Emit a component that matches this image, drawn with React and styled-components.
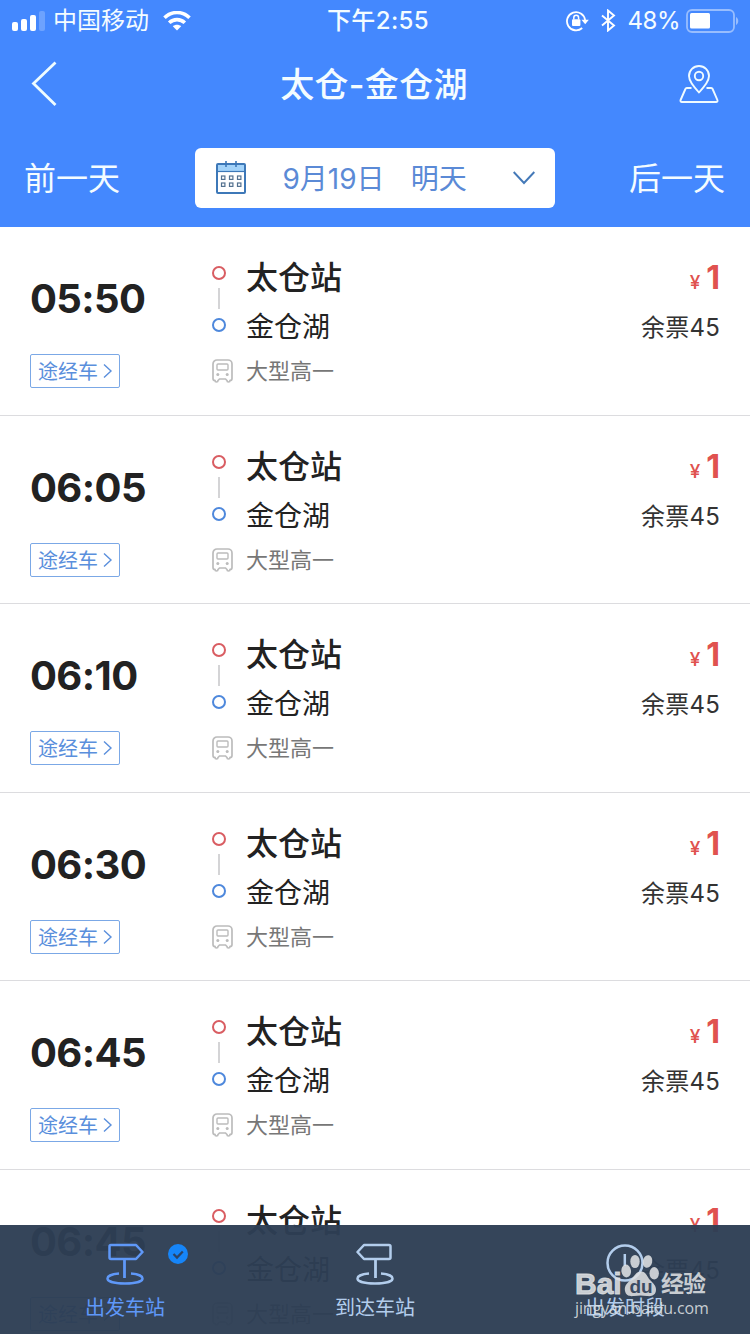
import React from "react";
import styled, { createGlobalStyle } from "styled-components";

const colors = {
  brand: "#4488fe",
  link: "#5a8fdc",
  text: "#222222",
  muted: "#777777",
  price: "#e0524f",
  border: "#dcdcdf",
};

const GlobalStyle = createGlobalStyle`
  * {
    box-sizing: border-box;
  }
  body {
    margin: 0;
    background: #ffffff;
    font-family: Inter, "Noto Sans CJK SC", sans-serif;
    color: ${colors.text};
  }
  svg {
    display: block;
    flex: none;
  }
`;

const Screen = styled.div`
  position: relative;
  width: 750px;
  height: 1334px;
  overflow: hidden;
  background: #ffffff;
`;

const Header = styled.header`
  height: 227px;
  background: ${colors.brand};
  color: #f4fcff;
`;

const StatusBar = styled.div`
  display: grid;
  grid-template-columns: 1fr auto 1fr;
  align-items: center;
  height: 40px;
  padding: 0 11px 0 12px;
  font-size: 24px;
  line-height: 40px;
`;

const StatusGroup = styled.div`
  display: flex;
  align-items: center;
  justify-content: ${({ $end }) => ($end ? "flex-end" : "flex-start")};
`;

const Carrier = styled.span`
  margin: 0 14px 0 8px;
  padding-top: 1px;
`;

const Clock = styled.span`
  font-weight: 500;
  padding-top: 1px;
  letter-spacing: 0.4px;
  margin-left: 5px;
`;

const Percent = styled.span`
  margin: 0 6px 0 12px;
  padding-top: 1px;
  letter-spacing: -0.5px;
`;

const NavBar = styled.div`
  display: flex;
  align-items: center;
  justify-content: space-between;
  height: 88px;
  padding: 0 31px;
`;

const Title = styled.h1`
  margin: 0;
  padding-top: 2px;
  font-size: 34px;
  letter-spacing: 0.3px;
  font-weight: 500;
  line-height: 48px;
`;

const DateBar = styled.div`
  display: flex;
  align-items: center;
  justify-content: space-between;
  height: 99px;
  padding: 0 25px 0 24px;
`;

const DayLink = styled.span`
  padding-top: 2px;
  font-size: 32px;
  line-height: 48px;
`;

const DatePicker = styled.div`
  display: flex;
  align-items: center;
  width: 360px;
  height: 60px;
  padding: 0 20px;
  border-radius: 6px;
  background: #ffffff;
  color: #5b8ad6;
  font-size: 28px;
  line-height: 58px;
`;

const DateText = styled.span`
  margin-left: 36px;
  padding-top: 3px;
`;

const DateHint = styled.span`
  flex: 1;
  margin-left: 26px;
  padding-top: 3px;
`;

const Trip = styled.article`
  display: flex;
  height: 188.6px;
  padding: 0 30px;
  border-bottom: 1px solid ${colors.border};
`;

const Departure = styled.div`
  display: flex;
  flex-direction: column;
  align-items: flex-start;
  width: 182px;
  padding-top: 48px;
`;

const Time = styled.span`
  font-size: 40px;
  font-weight: 700;
  letter-spacing: -0.6px;
  line-height: 48px;
`;

const Tag = styled.span`
  display: flex;
  align-items: center;
  gap: 5px;
  width: 90px;
  height: 34px;
  margin-top: 31px;
  padding-left: 7px;
  border: 1px solid #7ba8e6;
  border-radius: 2px;
  color: ${colors.link};
  font-size: 20px;
  line-height: 32px;
`;

const TagText = styled.span`
  padding-top: 2px;
`;

const Track = styled.div`
  display: flex;
  flex-direction: column;
  width: 34px;
  padding-top: 39px;
`;

const Dot = styled.span`
  width: 14px;
  height: 14px;
  border: 2px solid ${({ $color }) => $color};
  border-radius: 50%;
`;

const TrackLine = styled.span`
  width: 2px;
  height: 21px;
  margin: 8px 0 9px 6px;
  background: #d4d4d6;
`;

const Vehicle = styled.span`
  margin-top: 27px;
`;

const Stops = styled.div`
  flex: 1;
  display: flex;
  flex-direction: column;
  padding-top: 26px;
`;

const From = styled.span`
  font-size: 32px;
  font-weight: 500;
  line-height: 50px;
`;

const To = styled.span`
  font-size: 28px;
  line-height: 48px;
`;

const Model = styled.span`
  color: ${colors.muted};
  font-size: 22px;
  line-height: 40px;
`;

const Fare = styled.div`
  display: flex;
  flex-direction: column;
  align-items: flex-end;
  padding-top: 26px;
`;

const Price = styled.span`
  color: ${colors.price};
  font-size: 32px;
  font-weight: 700;
  line-height: 50px;
`;

const Yen = styled.small`
  margin-right: 6px;
  font-size: 19px;
  font-weight: 500;
`;

const Seats = styled.span`
  color: #333333;
  font-size: 24px;
  letter-spacing: 0.2px;
  line-height: 40px;
`;

const TabBar = styled.nav`
  position: absolute;
  left: 0;
  right: 0;
  bottom: 0;
  display: grid;
  grid-template-columns: repeat(3, 1fr);
  height: 109px;
  background: rgba(46, 62, 84, 0.965);
`;

const Tab = styled.div`
  position: relative;
  display: flex;
  flex-direction: column;
  align-items: center;
  padding-top: 17px;
  color: ${({ $active }) => ($active ? "#5f98f8" : "#b3cdec")};
`;

const TabLabel = styled.span`
  margin-top: 6px;
  font-size: 20px;
  line-height: 34px;
`;

const Badge = styled.span`
  position: absolute;
  top: 19px;
  left: 168px;
`;

const Watermark = styled.div`
  position: absolute;
  left: 575px;
  top: 1250px;
  width: 136px;
  color: rgba(222, 224, 227, 0.88);
`;

const Brand = styled.div`
  display: flex;
  align-items: flex-end;
  height: 49px;
  font-family: "Liberation Sans", "Noto Sans CJK SC", sans-serif;
  font-weight: 700;
  line-height: 30px;
`;

const BrandName = styled.span`
  width: 46px;
  font-size: 30px;
  -webkit-text-stroke: 1px currentColor;
`;

const Paw = styled.span`
  margin-bottom: 2px;
`;

const BrandTopic = styled.span`
  margin-left: 2px;
  font-size: 23px;
  letter-spacing: -1px;
`;

const Site = styled.div`
  font-family: "Open Sans", sans-serif;
  font-size: 16px;
  letter-spacing: -0.15px;
  line-height: 18px;
`;

const SignalIcon = () => (
  <svg width="33" height="20" viewBox="0 0 33 20" fill="#fff">
    <rect x="0" y="11" width="6" height="9" rx="2" />
    <rect x="9" y="8" width="6" height="12" rx="2" />
    <rect x="18" y="4" width="6" height="16" rx="2" />
    <rect x="27" y="0" width="6" height="20" rx="2" opacity=".22" />
  </svg>
);

const WifiIcon = () => (
  <svg width="28" height="20" viewBox="0 0 28 20" fill="none" stroke="#fff">
    <path d="M1.5 6.8C8.5-.2 19.5-.2 26.5 6.8" strokeWidth="3.6" />
    <path d="M6.2 11.8c4.4-4.3 11.2-4.3 15.6 0" strokeWidth="3.6" />
    <path d="M14 19.5l-4.2-4.3c2.4-2 6-2 8.4 0z" fill="#fff" stroke="none" />
  </svg>
);

const RotationLockIcon = () => (
  <svg width="23" height="22" viewBox="0 0 23 22" fill="none" stroke="#fff" strokeWidth="1.8">
    <path d="M16.2 18A9.1 9.1 0 1 1 19.1 10" />
    <path d="M15.5 9.8h7.3l-3.6 4.5z" fill="#fff" stroke="none" />
    <rect x="6" y="9.3" width="8.4" height="6.6" rx="1" fill="#fff" stroke="none" />
    <path d="M7.8 9.5V7.7a2.4 2.4 0 0 1 4.8 0v1.8" strokeWidth="1.5" />
  </svg>
);

const BluetoothIcon = () => (
  <svg width="27" height="23" viewBox="-12 0 27 23" fill="none" stroke="#fff" strokeWidth="1.9">
    <path d="M1 6.5l12 10-6 5V1.5l6 5-12 10" />
  </svg>
);

const BatteryIcon = () => (
  <svg width="53" height="24" viewBox="0 0 53 24">
    <rect x="1" y="1" width="47" height="22" rx="5" fill="none" stroke="#fff" strokeOpacity=".45" strokeWidth="1.8" />
    <rect x="4" y="4" width="20" height="15.5" rx="1.5" fill="#fff" />
    <path d="M50 8c3 1.5 3 6.5 0 8z" fill="#fff" opacity=".45" />
  </svg>
);

const BackIcon = () => (
  <svg width="38" height="46" viewBox="0 0 38 46" fill="none" stroke="#effcff" strokeWidth="2.8">
    <path d="M24.5 1.5L2.5 22.5l22 21.5" />
  </svg>
);

const MapIcon = () => (
  <svg width="40" height="38" viewBox="0 0 40 38" fill="none" stroke="#f0fbff" strokeWidth="1.9" strokeLinejoin="round">
    <path d="M20 27.5C14 20.5 10 15.8 10 11a10 10 0 0 1 20 0c0 4.8-4 9.5-10 16.5z" />
    <circle cx="20" cy="11" r="4.2" />
    <path d="M12.5 23H7.8a1.5 1.5 0 0 0-1.4 1L1.6 35c-.5 1.2.2 2 1.3 2h34.2c1.1 0 1.8-.8 1.3-2l-4.8-11a1.5 1.5 0 0 0-1.4-1h-4.7" />
  </svg>
);

const CalendarIcon = () => (
  <svg width="32" height="33" viewBox="0 0 32 33" fill="none" stroke="#3d78b8" strokeWidth="2">
    <rect x="2" y="3" width="28" height="29" rx="1" />
    <path d="M3 4h26v6H3z" fill="#a3d3fa" stroke="none" />
    <path d="M2 10.5h28" strokeWidth="1.2" />
    <path d="M11 0v6M21 0v6" strokeWidth="1.6" />
    {[15, 22].map((y) =>
      [6.5, 14.5, 22.5].map((x) => (
        <rect key={`${x}-${y}`} x={x} y={y} width="3.4" height="3.4" stroke="#53718f" strokeWidth="1.2" />
      ))
    )}
  </svg>
);

const ChevronDownIcon = () => (
  <svg width="22" height="14" viewBox="0 0 22 14" fill="none" stroke="#4479b8" strokeWidth="1.9">
    <path d="M.7 1L11 12 21.3 1" />
  </svg>
);

const ChevronRightIcon = () => (
  <svg width="10" height="16" viewBox="0 0 10 16" fill="none" stroke="#5a8fdc" strokeWidth="1.4">
    <path d="M1 1.5L8 8l-7 6.5" />
  </svg>
);

const BusIcon = () => (
  <svg width="21" height="24" viewBox="0 0 21 24" fill="none" stroke="#bcbcbc" strokeWidth="1.7">
    <path d="M5 1h11a4 4 0 0 1 4 4v14.5a2 2 0 0 1-2 2v0a1.5 1.5 0 0 1-3 0l-1.500-1.500h-6L6 21.500a1.500 1.500 0 0 1-3 0v0a2 2 0 0 1-2-2V5a4 4 0 0 1 4-4z" />
    <rect x="5" y="5" width="11" height="6" rx="1" strokeWidth="1.4" />
    <circle cx="5.8" cy="15.6" r="1.5" fill="#bcbcbc" stroke="none" />
    <circle cx="15.2" cy="15.6" r="1.5" fill="#bcbcbc" stroke="none" />
  </svg>
);

const SignpostIcon = ({ flip }) => (
  <svg width="38" height="43" viewBox="0 0 38 43" fill="none" stroke="currentColor" strokeWidth="2.5" strokeLinejoin="round">
    <g transform={flip ? "matrix(-1 0 0 1 38 0)" : undefined}>
      <path d="M5 3h25l6.500 7-6.500 7H5a1.500 1.500 0 0 1-1.500-1.500v-11A1.500 1.500 0 0 1 5 3z" />
      <path d="M18.5 17v19" strokeWidth="2.8" />
      <path d="M13 31.5C6 32 1.5 34 1.5 36.5c0 3 7.5 5 17.5 5s17.5-2 17.5-5c0-2.5-4.5-4.5-11.5-5" />
    </g>
  </svg>
);

const ClockIcon = () => (
  <svg width="38" height="43" viewBox="0 0 38 43" fill="none" stroke="currentColor" strokeWidth="2.5">
    <circle cx="19" cy="21" r="17.5" />
    <path d="M18.8 12v12" />
  </svg>
);

const CheckIcon = () => (
  <svg width="20" height="20" viewBox="0 0 20 20">
    <circle cx="10" cy="10" r="10" fill="#1685f8" />
    <path d="M5.5 10l3.5 3.5 5.8-6" fill="none" stroke="#2c4365" strokeWidth="2.3" />
  </svg>
);

const PawIcon = () => (
  <svg width="38" height="43" viewBox="0 0 38 43" fill="currentColor">
    <ellipse cx="5.2" cy="17" rx="4.8" ry="6.4" transform="rotate(-8 5.2 17)" />
    <ellipse cx="14" cy="7.5" rx="4.7" ry="6.6" />
    <ellipse cx="26.5" cy="7.5" rx="4.7" ry="6.4" transform="rotate(14 26.5 7.5)" />
    <ellipse cx="33.2" cy="19.3" rx="4.7" ry="6.2" />
    <path d="M20 17.5c-5 0-6.500 4.500-10 8C6.500 29 3 31.500 4 37c1 4.800 4.500 5.500 9 5 5-.7 8-.7 13 0 5 .7 9-1 9-6.500 0-4-3-6.500-6-9.500-3-3.500-4-8.500-9-8.500z" />
    <text x="20" y="38.5" textAnchor="middle" fontFamily="Liberation Sans" fontSize="19" fontWeight="700" fill="#3b4b62">
      du
    </text>
  </svg>
);

const times = ["05:50", "06:05", "06:10", "06:30", "06:45", "06:45"];

const trips = times.map((time) => ({
  time,
  from: "太仓站",
  to: "金仓湖",
  model: "大型高一",
  price: 1,
  seats: 45,
}));

const TripItem = ({ trip }) => (
  <Trip>
    <Departure>
      <Time>{trip.time}</Time>
      <Tag>
        <TagText>途经车</TagText>
        <ChevronRightIcon />
      </Tag>
    </Departure>
    <Track>
      <Dot $color="#d95d62" />
      <TrackLine />
      <Dot $color="#4e88dc" />
      <Vehicle>
        <BusIcon />
      </Vehicle>
    </Track>
    <Stops>
      <From>{trip.from}</From>
      <To>{trip.to}</To>
      <Model>{trip.model}</Model>
    </Stops>
    <Fare>
      <Price>
        <Yen>¥</Yen>
        {trip.price}
      </Price>
      <Seats>余票{trip.seats}</Seats>
    </Fare>
  </Trip>
);

const App = () => {
  return (
    <Screen>
      <GlobalStyle />
      <Header>
        <StatusBar>
          <StatusGroup>
            <SignalIcon />
            <Carrier>中国移动</Carrier>
            <WifiIcon />
          </StatusGroup>
          <Clock>下午2:55</Clock>
          <StatusGroup $end>
            <RotationLockIcon />
            <BluetoothIcon />
            <Percent>48%</Percent>
            <BatteryIcon />
          </StatusGroup>
        </StatusBar>
        <NavBar>
          <BackIcon />
          <Title>太仓-金仓湖</Title>
          <MapIcon />
        </NavBar>
        <DateBar>
          <DayLink>前一天</DayLink>
          <DatePicker>
            <CalendarIcon />
            <DateText>9月19日</DateText>
            <DateHint>明天</DateHint>
            <ChevronDownIcon />
          </DatePicker>
          <DayLink>后一天</DayLink>
        </DateBar>
      </Header>
      <main>
        {trips.map((trip, index) => (
          <TripItem key={index} trip={trip} />
        ))}
      </main>
      <TabBar>
        <Tab $active>
          <SignpostIcon />
          <TabLabel>出发车站</TabLabel>
          <Badge>
            <CheckIcon />
          </Badge>
        </Tab>
        <Tab>
          <SignpostIcon flip />
          <TabLabel>到达车站</TabLabel>
        </Tab>
        <Tab>
          <ClockIcon />
          <TabLabel>出发时段</TabLabel>
        </Tab>
      </TabBar>
      <Watermark>
        <Brand>
          <BrandName>Bai</BrandName>
          <Paw>
            <PawIcon />
          </Paw>
          <BrandTopic>经验</BrandTopic>
        </Brand>
        <Site>jingyan.baidu.com</Site>
      </Watermark>
    </Screen>
  );
};

export default App;
